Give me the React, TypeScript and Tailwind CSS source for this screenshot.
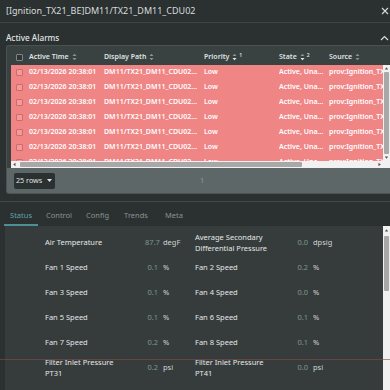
import React from 'react'

const font = { fontFamily: '"Noto Sans", "Open Sans", sans-serif' }

function SortIcon() {
  return (
    <svg width="5" height="8" viewBox="0 0 5 8" className="ml-[3px] shrink-0">
      <path d="M0.5 3 L2.5 0.8 L4.5 3 Z" fill="#8a9494" />
      <path d="M0.5 5 L2.5 7.2 L4.5 5 Z" fill="#8a9494" />
    </svg>
  )
}

function SortActive() {
  return (
    <svg width="5" height="8" viewBox="0 0 5 8" className="ml-[3px] shrink-0">
      <path d="M0.5 3 L2.5 0.8 L4.5 3 Z" fill="#8a9494" />
      <path d="M0.5 5 L2.5 7.2 L4.5 5 Z" fill="#e6e8e8" />
    </svg>
  )
}

const rows = Array.from({ length: 7 })

const items: [string, string, string, string, string, string][] = [
  ['Air Temperature', '87.7', 'degF', 'Average Secondary\nDifferential Pressure', '0.0', 'dpsig'],
  ['Fan 1 Speed', '0.1', '%', 'Fan 2 Speed', '0.2', '%'],
  ['Fan 3 Speed', '0.1', '%', 'Fan 4 Speed', '0.0', '%'],
  ['Fan 5 Speed', '0.1', '%', 'Fan 6 Speed', '0.1', '%'],
  ['Fan 7 Speed', '0.2', '%', 'Fan 8 Speed', '0.1', '%'],
  ['Filter Inlet Pressure\nPT31', '0.2', 'psi', 'Filter Inlet Pressure\nPT41', '0.0', 'psi'],
  ['Supply Pressure', '0.0', 'psi', 'Pump Speed P31', '0.0', '%'],
]

function Cell({ label, value, unit }: { label: string; value: string; unit: string }) {
  return (
    <div className="flex h-[25px] items-center">
      <div className="w-[100px] whitespace-pre-line text-[7.5px] leading-[10.5px] text-[#e4e7e7]">{label}</div>
      <div className="w-[13px] text-right text-[7.5px] text-[#7d9794]">{value}</div>
      <div className="ml-[5px] text-[7.5px] text-[#d0d4d4]">{unit}</div>
    </div>
  )
}

export default function App() {
  return (
    <div style={font} className="relative h-[390px] w-[390px] overflow-hidden bg-[#2b3030]">
      {/* title */}
      <div className="flex h-[23px] items-center justify-between border-b border-[#3e4545] pl-[6px] pr-[1px]">
        <span className="text-[9px] text-[#d8dcdc]">[Ignition_TX21_BE]DM11/TX21_DM11_CDU02</span>
        <svg width="8" height="8" viewBox="0 0 8 8">
          <path d="M1 1 L7 7 M7 1 L1 7" stroke="#d8dcdc" strokeWidth="1.1" />
        </svg>
      </div>

      <div className="flex h-[22px] items-start justify-between pl-[6px] pr-[1px] pt-[9px]">
        <span className="text-[8.2px] font-medium leading-[12px] text-[#e0e4e4]">Active Alarms</span>
        <svg width="9" height="6" viewBox="0 0 9 6" className="mt-[3px]">
          <path d="M1 5 L4.5 1.5 L8 5" stroke="#d8dcdc" strokeWidth="1.2" fill="none" />
        </svg>
      </div>

      {/* alarms table */}
      <div className="ml-[6px] overflow-hidden rounded-l-[3px] border-y border-l border-[#4a5252] bg-[#3a4141]">
        <div className="flex h-[19px] items-center whitespace-nowrap pl-[4px] pt-[3px] text-[7px] font-semibold text-[#dfe3e3]">
          <div className="flex w-[18px] justify-center pr-[1px]">
            <div className="h-[7px] w-[7px] rounded-[1px] border border-[#7c8686] bg-[#2f3535]" />
          </div>
          <div className="flex w-[75px] items-center">Active Time<SortIcon /></div>
          <div className="flex w-[100px] items-center">Display Path<SortIcon /></div>
          <div className="flex w-[75px] items-center">Priority<SortActive /><span className="ml-[2px] -mt-[3px] text-[5px] leading-none">1</span></div>
          <div className="flex w-[50px] items-center">State<SortActive /><span className="ml-[2px] -mt-[3px] text-[5px] leading-none">2</span></div>
          <div className="flex items-center">Source<SortIcon /></div>
        </div>

        <div className="flex">
          <div className="min-w-0 flex-1 overflow-hidden pl-[4px]">
            <div className="h-[96px] overflow-hidden bg-[#f08585]">
              {rows.map((_, i) => (
                <div key={i} className="flex h-[15px] items-center whitespace-nowrap text-[7px] font-semibold text-white">
                  <div className="flex w-[18px] shrink-0 justify-center pr-[1px]">
                    <div className="h-[7px] w-[7px] rounded-[1px] border border-[#cf6a6a] bg-[#f39a9a]" />
                  </div>
                  <div className="w-[75px] shrink-0">02/13/2026 20:38:01</div>
                  <div className="w-[100px] shrink-0 pr-[6px]"><div className="truncate">DM11/TX21_DM11_CDU02/Status</div></div>
                  <div className="w-[75px] shrink-0">Low</div>
                  <div className="w-[50px] shrink-0 pr-[4px]"><div className="truncate">Active, Unacked</div></div>
                  <div className="shrink-0">prov:Ignition_TX21_BE</div>
                </div>
              ))}
            </div>
            {/* horizontal scrollbar */}
            <div className="flex h-[7px] items-center bg-[#f1f1f1]">
              <svg width="5" height="5" viewBox="0 0 5 5" className="ml-[1px]">
                <path d="M3.5 0.8 L1.2 2.5 L3.5 4.2 Z" fill="#505050" />
              </svg>
              <div className="ml-[3px] h-[5px] w-[282px] rounded-[1px] bg-[#a8a8a8]" />
              <div className="flex-1" />
              <svg width="5" height="5" viewBox="0 0 5 5" className="mr-[1px]">
                <path d="M1.5 0.8 L3.8 2.5 L1.5 4.2 Z" fill="#505050" />
              </svg>
            </div>
          </div>
          {/* vertical scrollbar */}
          <div className="flex w-[7px] shrink-0 flex-col items-center bg-[#f1f1f1]">
            <svg width="5" height="5" viewBox="0 0 5 5" className="mt-[1px]">
              <path d="M0.8 3.5 L2.5 1.2 L4.2 3.5 Z" fill="#505050" />
            </svg>
            <div className="mt-[1px] h-[82px] w-[5px] rounded-[1px] bg-[#a8a8a8]" />
            <svg width="5" height="5" viewBox="0 0 5 5" className="mt-[1px]">
              <path d="M0.8 1.5 L2.5 3.8 L4.2 1.5 Z" fill="#505050" />
            </svg>
          </div>
        </div>

        {/* footer */}
        <div className="flex h-[25px] items-center bg-[#5d6767] pl-[7px]">
          <div className="flex h-[16px] w-[41px] items-center justify-between whitespace-nowrap rounded-[2px] bg-[#2b3030] pl-[2px] pr-[3px]">
            <span className="text-[7.2px] text-[#e0e4e4]">25 rows</span>
            <svg width="5" height="3" viewBox="0 0 5 3">
              <path d="M0 0 L5 0 L2.5 3 Z" fill="#e0e4e4" />
            </svg>
          </div>
          <span className="ml-[145px] text-[7.5px] text-[#8f9a9a]">1</span>
        </div>
      </div>

      <div className="mt-[7px] h-[25px] border-t border-[#424949]">
        <div className="flex h-[24px] items-end pl-[4px] text-[7.5px] text-[#8a9494]">
          <div className="flex w-[34px] justify-center border-b-2 border-[#4d8f97] pb-[3px] text-[#5aa5ae]">Status</div>
          <div className="ml-[8px] pb-[5px]">Control</div>
          <div className="ml-[14px] pb-[5px]">Config</div>
          <div className="ml-[15px] pb-[5px]">Trends</div>
          <div className="ml-[17px] pb-[5px]">Meta</div>
        </div>
      </div>

      {/* status content */}
      <div className="ml-[4px] flex h-[170px] border-l border-[#2a2f2f] bg-[#363c3c]">
        <div className="flex-1 pt-[4px]">
          {items.map((it, i) => (
            <div key={i} className="flex">
              <div className="ml-[40px] w-[150px]">
                <Cell label={it[0]} value={it[1]} unit={it[2]} />
              </div>
              <div>
                <Cell label={it[3]} value={it[4]} unit={it[5]} />
              </div>
            </div>
          ))}
        </div>
        <div className="flex w-[7px] flex-col items-center bg-[#f1f1f1]">
          <svg width="5" height="5" viewBox="0 0 5 5" className="mt-[2px]">
            <path d="M0.8 3.5 L2.5 1.2 L4.2 3.5 Z" fill="#505050" />
          </svg>
          <div className="mt-[3px] h-[55px] w-[5px] rounded-[1px] bg-[#a8a8a8]" />
          <div className="flex-1" />
          <svg width="5" height="5" viewBox="0 0 5 5" className="mb-[2px]">
            <path d="M0.8 1.5 L2.5 3.8 L4.2 1.5 Z" fill="#505050" />
          </svg>
        </div>
      </div>

      <div className="absolute left-0 top-[359px] h-px w-full bg-[#8a4a4a] opacity-60" />
    </div>
  )
}
